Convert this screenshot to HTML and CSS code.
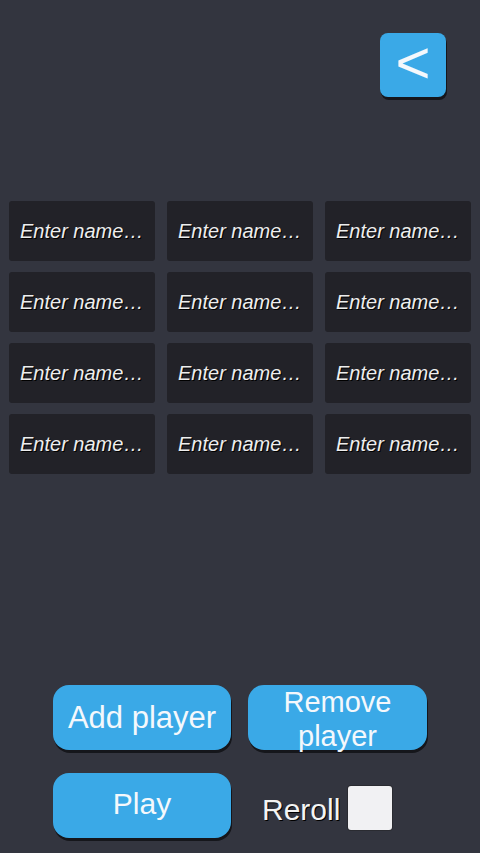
FILE: index.html
```html
<!DOCTYPE html>
<html lang="en">
<head>
  <meta charset="UTF-8">
  <meta name="viewport" content="width=device-width, initial-scale=1">
  <title>Players</title>
  <link rel="stylesheet" href="styles.css">
</head>
<body>
  <div class="top-bar">
    <button class="btn back-btn">&lt;</button>
  </div>

  <div class="names">
    <input class="name-field" type="text" placeholder="Enter name…">
    <input class="name-field" type="text" placeholder="Enter name…">
    <input class="name-field" type="text" placeholder="Enter name…">
    <input class="name-field" type="text" placeholder="Enter name…">
    <input class="name-field" type="text" placeholder="Enter name…">
    <input class="name-field" type="text" placeholder="Enter name…">
    <input class="name-field" type="text" placeholder="Enter name…">
    <input class="name-field" type="text" placeholder="Enter name…">
    <input class="name-field" type="text" placeholder="Enter name…">
    <input class="name-field" type="text" placeholder="Enter name…">
    <input class="name-field" type="text" placeholder="Enter name…">
    <input class="name-field" type="text" placeholder="Enter name…">
  </div>

  <div class="controls">
    <button class="btn add-btn">Add player</button>
    <button class="btn remove-btn">Remove<br>player</button>
    <button class="btn play-btn">Play</button>
    <label class="reroll">
      <span class="reroll-label">Reroll</span>
      <span class="checkbox"></span>
    </label>
  </div>
</body>
</html>
```

FILE: styles.css
```css
body {
  margin: 0;
  height: 100vh;
  box-sizing: border-box;
  background-color: #33353f;
  color: #f2f2f2;
  font-family: 'Liberation Sans', Arial, sans-serif;
  display: flex;
  flex-direction: column;
  padding-bottom: 15px;
}
.btn {
  border: none;
  background-color: #3aa9e7;
  color: #f4f8fc;
  font-family: inherit;
  box-shadow: 1px 3px 0 #15161b;
  padding: 0;
}
.top-bar {
  display: flex;
  justify-content: flex-end;
  padding: 33px 34px 0;
}
.back-btn {
  width: 66px;
  height: 64px;
  border-radius: 8px;
  font-size: 60px;
  line-height: 60px;
  padding-bottom: 6px;
}
.names {
  margin-top: 104px;
  padding: 0 9px;
  display: grid;
  grid-template-columns: repeat(3, 1fr);
  gap: 11px 12px;
}
.name-field {
  height: 60px;
  min-width: 0;
  box-sizing: border-box;
  border: none;
  border-radius: 3px;
  background-color: #222228;
  padding: 0 0 0 11px;
  font-family: inherit;
  font-size: 20px;
  font-style: italic;
  color: #f2f2f2;
  text-shadow: 1px 1px 0 #000;
}
.name-field::placeholder {
  color: #eeeeee;
  opacity: 1;
}
.controls {
  margin-top: auto;
  padding-left: 53px;
  display: grid;
  grid-template-columns: 178px 179px;
  gap: 23px 17px;
}
.add-btn,
.remove-btn,
.play-btn {
  height: 65px;
  border-radius: 16px;
}
.add-btn {
  font-size: 31px;
}
.remove-btn {
  font-size: 29px;
  line-height: 34px;
  padding-bottom: 6px;
}
.play-btn {
  font-size: 30px;
  padding-bottom: 4px;
}
.reroll {
  display: flex;
  align-items: center;
  padding-left: 14px;
}
.reroll-label {
  font-size: 30px;
  color: #f4f4f4;
  text-shadow: 1px 1px 0 #000;
  margin-top: 8px;
}
.checkbox {
  width: 44px;
  height: 44px;
  margin-left: 8px;
  margin-top: 4px;
  border-radius: 3px;
  background-color: #f1f1f3;
  box-shadow: 0 0 0 1px #2a2b31;
}
```
